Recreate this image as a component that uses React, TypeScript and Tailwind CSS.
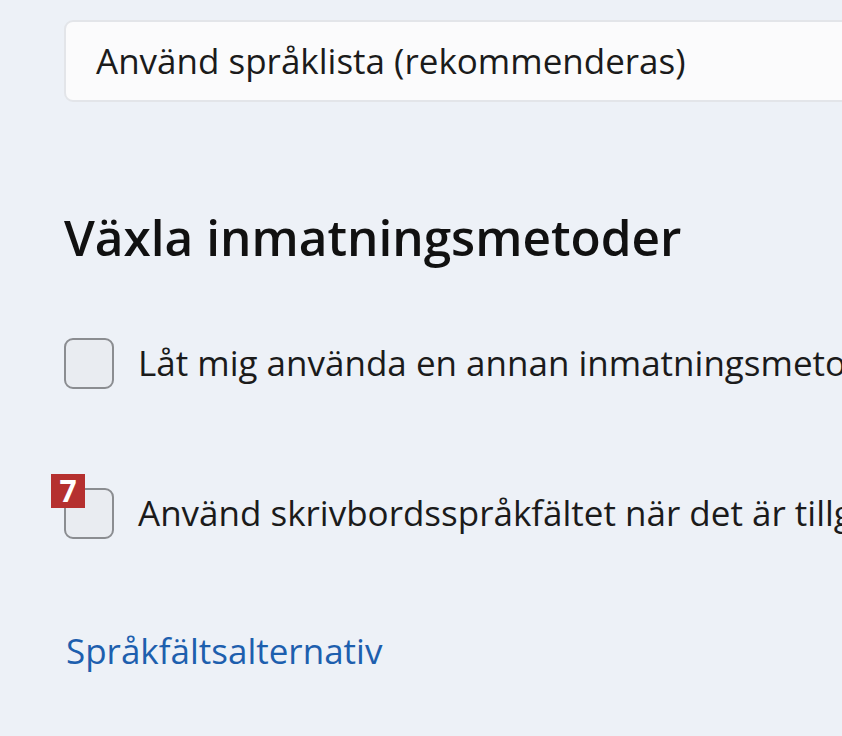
import React from 'react';

const Checkbox = ({ label, badge }: { label: string; badge?: string }) => {
    return (
        <div className="flex items-center gap-[24px] h-[52px]">
            <div className="relative shrink-0">
                <div className="w-[50px] h-[51px] rounded-[9px] border-2 border-[#8b8d91] bg-[#e9ecf1]"></div>
                {badge && (
                    <span className="absolute left-[-13px] top-[-14px] w-[34px] h-[34px] bg-[#b5302f] text-white font-bold text-[30px] leading-[34px] text-center">
                        {badge}
                    </span>
                )}
            </div>
            <span className="whitespace-nowrap text-[35px] text-[#1b1b1b]">{label}</span>
        </div>
    );
};

const App = () => {
    return (
        <div
            className="w-[842px] h-[736px] overflow-hidden bg-[#edf1f7] pt-[20px]"
            style={{ fontFamily: '"Open Sans", "Noto Sans", sans-serif' }}
        >
            <div className="ml-[64px] w-[900px] h-[82px] rounded-[9px] border-2 border-[#e3e5e9] bg-[#fbfbfc] flex items-center pl-[30px]">
                <span className="whitespace-nowrap text-[35px] text-[#1b1b1b]">Använd språklista (rekommenderas)</span>
            </div>

            <h2 className="ml-[64px] mt-[105px] whitespace-nowrap text-[49.5px] font-semibold text-[#111] leading-[60px]">
                Växla inmatningsmetoder
            </h2>

            <div className="ml-[64px] mt-[70px] flex flex-col gap-[98px]">
                <Checkbox label="Låt mig använda en annan inmatningsmetod för varje appfönster" />
                <Checkbox label="Använd skrivbordsspråkfältet när det är tillgängligt" badge="7" />
            </div>

            <div className="ml-[66px] mt-[86px] whitespace-nowrap text-[35px] text-[#1d5fae]">
                Språkfältsalternativ
            </div>
        </div>
    );
};

export default App;
